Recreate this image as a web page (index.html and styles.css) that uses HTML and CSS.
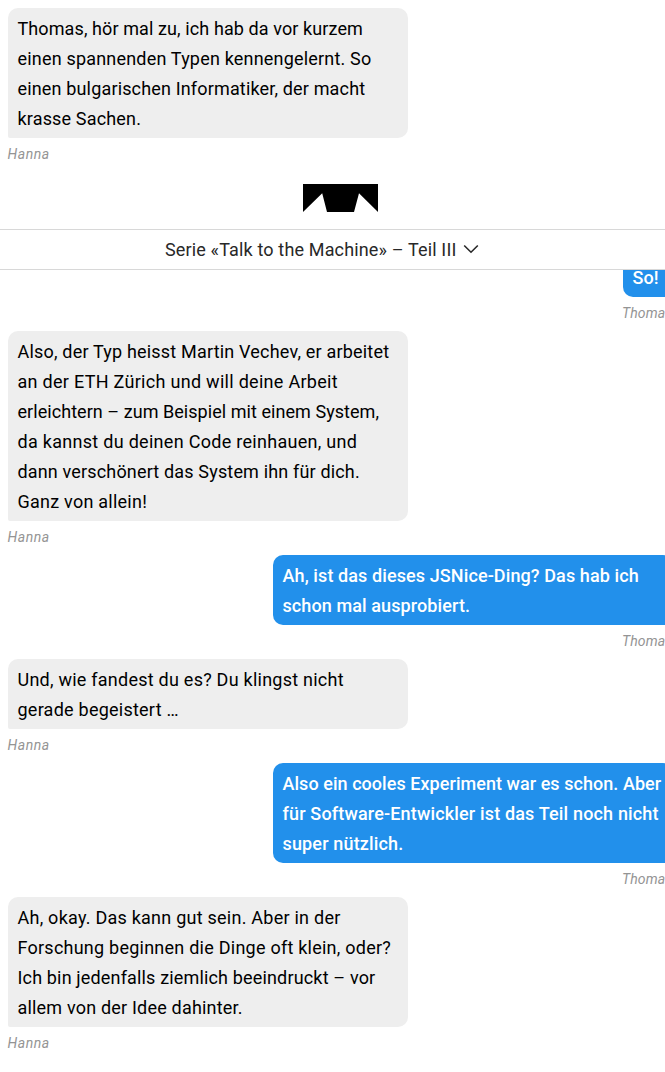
FILE: index.html
```
<!DOCTYPE html>
<html lang="de">
<head>
<meta charset="utf-8">
<title>Talk to the Machine – Teil III</title>
<link rel="stylesheet" href="styles.css">
</head>
<body>
<div class="page">
  <section class="chat chat-top">
    <div class="message">
      <p class="bubble"><span class="line t2">Thomas, hör mal zu, ich hab da vor kurzem</span><span class="line t4">einen spannenden Typen kennengelernt. So</span><span class="line t3">einen bulgarischen Informatiker, der macht</span><span class="line t3">krasse Sachen.</span></p>
      <div class="author">Hanna</div>
    </div>
  </section>

  <header class="header">
    <div class="brand">
      <svg class="logo" viewBox="0 0 75 28" width="75" height="28" aria-label="Logo"><path d="M0 0H75V28L56 9.2L51 28H24L19.2 9.2L0 28Z"/></svg>
    </div>
    <nav class="series">
      <span class="series-title">Serie «Talk to the Machine» – Teil III</span>
      <svg class="chevron" viewBox="0 0 16 10" width="16" height="10"><path d="M1.2 1.5L8 8.2L14.8 1.5"/></svg>
    </nav>
  </header>

  <section class="chat chat-main">
    <div class="message own">
      <p class="bubble"><span class="line t2">So!</span></p>
      <div class="author">Thomas</div>
    </div>
    <div class="message">
      <p class="bubble"><span class="line t4">Also, der Typ heisst Martin Vechev, er arbeitet</span><span class="line t6">an der ETH Zürich und will deine Arbeit</span><span class="line t1">erleichtern – zum Beispiel mit einem System,</span><span class="line t6">da kannst du deinen Code reinhauen, und</span><span class="line t3">dann verschönert das System ihn für dich.</span><span class="line t5">Ganz von allein!</span></p>
      <div class="author">Hanna</div>
    </div>
    <div class="message own">
      <p class="bubble"><span class="line t2">Ah, ist das dieses JSNice-Ding? Das hab ich</span><span class="line t2">schon mal ausprobiert.</span></p>
      <div class="author">Thomas</div>
    </div>
    <div class="message">
      <p class="bubble"><span class="line t5">Und, wie fandest du es? Du klingst nicht</span><span class="line t5">gerade begeistert …</span></p>
      <div class="author">Hanna</div>
    </div>
    <div class="message own">
      <p class="bubble"><span class="line t1">Also ein cooles Experiment war es schon. Aber</span><span class="line t3">für Software-Entwickler ist das Teil noch nicht</span><span class="line t3">super nützlich.</span></p>
      <div class="author">Thomas</div>
    </div>
    <div class="message">
      <p class="bubble"><span class="line t5">Ah, okay. Das kann gut sein. Aber in der</span><span class="line t5">Forschung beginnen die Dinge oft klein, oder?</span><span class="line t3">Ich bin jedenfalls ziemlich beeindruckt – vor</span><span class="line t4">allem von der Idee dahinter.</span></p>
      <div class="author">Hanna</div>
    </div>
  </section>
</div>
</body>
</html>
```

FILE: styles.css
```
* { box-sizing: border-box; }
html { overflow: hidden; }
body {
  margin: 0;
  background: #fff;
  color: #000;
  font: 18px/30px Roboto, "Liberation Sans", sans-serif;
  overflow: hidden;
}
.page { width: 680px; }
.chat { display: flex; flex-direction: column; padding: 0 7.5px; }
.chat-top { height: 172px; padding-top: 8px; }
.chat-main { overflow: hidden; }
.chat-main .message:first-child { margin-top: -13px; }
.message {
  display: flex;
  flex-direction: column;
  align-items: flex-start;
}
.bubble {
  margin: 0;
  padding: 6px 10px 4px;
  width: 400px;
  background: #eee;
  border-radius: 10px 10px 10px 2px;
}
.own { align-items: flex-end; }
.own .bubble {
  background: #2290eb;
  color: #fff;
  font-weight: 500;
  border-radius: 10px 10px 2px 10px;
}
.own:first-child .bubble { width: 50px; }
.line { display: block; white-space: nowrap; }
.t1 { letter-spacing: .05px; }
.t2 { letter-spacing: .1px; }
.t3 { letter-spacing: .16px; }
.t4 { letter-spacing: .19px; }
.t5 { letter-spacing: .24px; }
.t6 { letter-spacing: .29px; }
.author {
  height: 34px;
  line-height: 33px;
  font-size: 14px;
  font-style: italic;
  letter-spacing: .55px;
  color: #949494;
}
.own .author { letter-spacing: .15px; }
.header { background: #fff; }
.brand {
  display: flex;
  justify-content: center;
  height: 57px;
  padding-top: 12px;
}
.logo { display: block; }
.series {
  display: flex;
  align-items: center;
  gap: 7px;
  height: 41px;
  padding-left: 165px;
  border-top: 1px solid #d8d8d8;
  border-bottom: 1px solid #d8d8d8;
  color: #282828;
}
.series-title { letter-spacing: .15px; white-space: nowrap; }
.chevron { fill: none; stroke: #282828; stroke-width: 1.6; margin-bottom: 2px; }
```
